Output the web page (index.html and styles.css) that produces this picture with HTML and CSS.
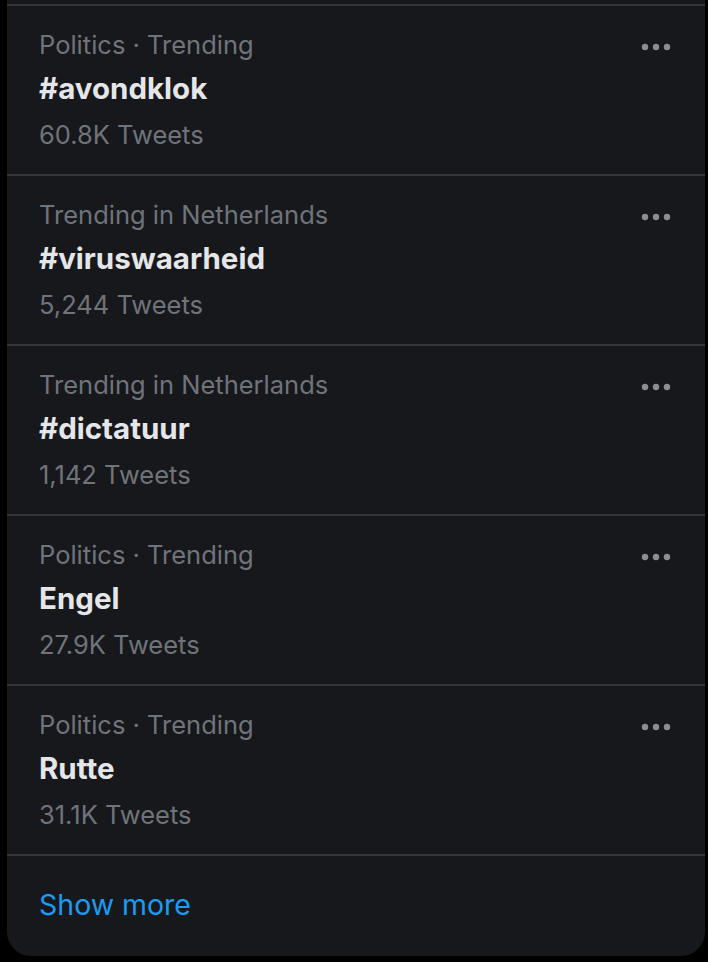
FILE: index.html
```html
<!DOCTYPE html>
<html lang="en">
<head>
<meta charset="utf-8">
<title>Trends</title>
<link rel="stylesheet" href="styles.css">
</head>
<body>
<div class="card">
  <div class="trend">
    <div class="trend-text">
      <div class="meta">Politics · Trending</div>
      <div class="name">#avondklok</div>
      <div class="count">60.8K Tweets</div>
    </div>
    <svg class="more" width="34" height="8" viewBox="0 0 34 8"><circle cx="5" cy="4" r="3.2"/><circle cx="16" cy="4" r="3.2"/><circle cx="27" cy="4" r="3.2"/></svg>
  </div>
  <div class="trend">
    <div class="trend-text">
      <div class="meta">Trending in Netherlands</div>
      <div class="name">#viruswaarheid</div>
      <div class="count">5,244 Tweets</div>
    </div>
    <svg class="more" width="34" height="8" viewBox="0 0 34 8"><circle cx="5" cy="4" r="3.2"/><circle cx="16" cy="4" r="3.2"/><circle cx="27" cy="4" r="3.2"/></svg>
  </div>
  <div class="trend">
    <div class="trend-text">
      <div class="meta">Trending in Netherlands</div>
      <div class="name">#dictatuur</div>
      <div class="count">1,142 Tweets</div>
    </div>
    <svg class="more" width="34" height="8" viewBox="0 0 34 8"><circle cx="5" cy="4" r="3.2"/><circle cx="16" cy="4" r="3.2"/><circle cx="27" cy="4" r="3.2"/></svg>
  </div>
  <div class="trend">
    <div class="trend-text">
      <div class="meta">Politics · Trending</div>
      <div class="name">Engel</div>
      <div class="count">27.9K Tweets</div>
    </div>
    <svg class="more" width="34" height="8" viewBox="0 0 34 8"><circle cx="5" cy="4" r="3.2"/><circle cx="16" cy="4" r="3.2"/><circle cx="27" cy="4" r="3.2"/></svg>
  </div>
  <div class="trend">
    <div class="trend-text">
      <div class="meta">Politics · Trending</div>
      <div class="name">Rutte</div>
      <div class="count">31.1K Tweets</div>
    </div>
    <svg class="more" width="34" height="8" viewBox="0 0 34 8"><circle cx="5" cy="4" r="3.2"/><circle cx="16" cy="4" r="3.2"/><circle cx="27" cy="4" r="3.2"/></svg>
  </div>
  <div class="show-more">Show more</div>
</div>
</body>
</html>
```

FILE: styles.css
```css
html, body {
  margin: 0;
  padding: 0;
  background: #000;
}
body {
  width: 708px;
  height: 962px;
  overflow: hidden;
  font-family: Inter, "Noto Sans", sans-serif;
}
.card {
  margin-left: 7px;
  width: 698px;
  height: 956px;
  background: #17181c;
  border-radius: 0 0 24px 24px;
  padding-top: 4px;
  box-sizing: border-box;
}
.trend {
  height: 170px;
  box-sizing: border-box;
  border-top: 2px solid #34363b;
  display: flex;
  justify-content: space-between;
  align-items: flex-start;
  padding: 0 31px 0 32px;
}
.trend-text {
  padding-top: 23px;
}
.meta, .count {
  font-size: 25.5px;
  line-height: 32px;
  color: #6f747a;
}
.name {
  font-size: 29.5px;
  font-weight: 700;
  line-height: 32px;
  color: #e4e6e8;
  margin: 11px 0 15px;
}
.more {
  margin-top: 37px;
  fill: #8a8d93;
}
.show-more {
  border-top: 2px solid #34363b;
  padding: 32px 32px 0;
  font-size: 28.5px;
  line-height: 34px;
  color: #1d9bf0;
}
```
